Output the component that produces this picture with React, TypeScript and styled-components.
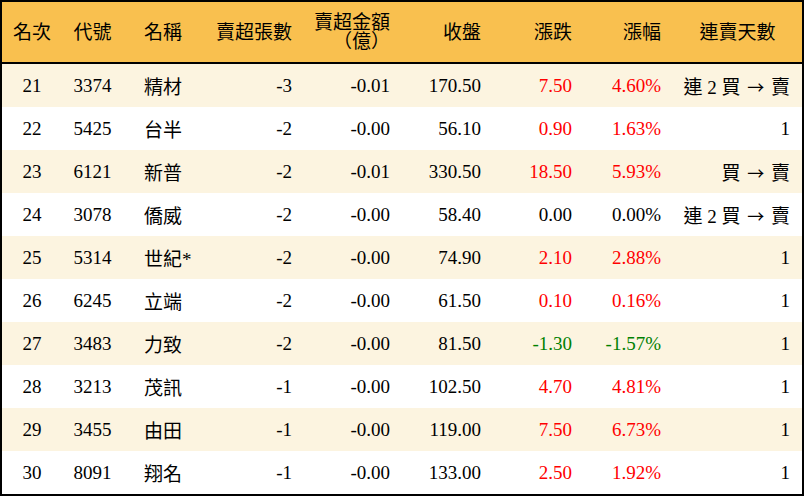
import React from "react";
import styled, { createGlobalStyle } from "styled-components";

const Global = createGlobalStyle`
  html, body { margin: 0; padding: 0; background: #ffffff; }
  * { box-sizing: border-box; }
`;

const COLS = "60px 61px 81px 100px 98px 91px 91px 89px 129px";

type Align = "center" | "left" | "right";
type Tone = "up" | "down" | "flat";

const Board = styled.div`
  width: 804px;
  height: 496px;
  border: 2px solid #000;
  background: #fff;
  font-family: "Liberation Serif", "Noto Sans CJK TC", serif;
  font-size: 19px;
  color: #000;
  display: flex;
  flex-direction: column;
  text-spacing-trim: space-all;
`;

const HeadRow = styled.div`
  display: grid;
  grid-template-columns: ${COLS};
  height: 62px;
  background: #f9c04f;
  border-bottom: 2px solid #000;
  align-items: center;
`;

const HeadCell = styled.div<{ $align: Align }>`
  text-align: ${(p) => p.$align};
  padding: ${(p) =>
    p.$align === "left" ? "0 0 0 21px" : p.$align === "right" ? "0 12px 0 0" : "0"};
  line-height: 19px;
  white-space: nowrap;
`;

const Row = styled.div<{ $striped: boolean }>`
  display: grid;
  grid-template-columns: ${COLS};
  height: 43px;
  background: ${(p) => (p.$striped ? "#fcf4e0" : "#ffffff")};
  align-items: center;
`;

const Cell = styled.div<{ $align: Align; $tone?: Tone }>`
  text-align: ${(p) => p.$align};
  padding: ${(p) =>
    p.$align === "left" ? "0 0 0 21px" : p.$align === "right" ? "0 12px 0 0" : "0"};
  color: ${(p) => (p.$tone === "up" ? "#ff0000" : p.$tone === "down" ? "#008000" : "#000")};
  white-space: nowrap;
`;

const Arrow = styled.span`
  font-family: "Noto Sans CJK TC", sans-serif;
  font-size: 17px;
  margin: 0 2px;
`;

type Item = {
  rank: number;
  code: string;
  name: string;
  lots: string;
  amount: string;
  close: string;
  change: string;
  pct: string;
  streak: string;
};

const data: Item[] = [
  { rank: 21, code: "3374", name: "精材", lots: "-3", amount: "-0.01", close: "170.50", change: "7.50", pct: "4.60%", streak: "連 2 買 → 賣" },
  { rank: 22, code: "5425", name: "台半", lots: "-2", amount: "-0.00", close: "56.10", change: "0.90", pct: "1.63%", streak: "1" },
  { rank: 23, code: "6121", name: "新普", lots: "-2", amount: "-0.01", close: "330.50", change: "18.50", pct: "5.93%", streak: "買 → 賣" },
  { rank: 24, code: "3078", name: "僑威", lots: "-2", amount: "-0.00", close: "58.40", change: "0.00", pct: "0.00%", streak: "連 2 買 → 賣" },
  { rank: 25, code: "5314", name: "世紀*", lots: "-2", amount: "-0.00", close: "74.90", change: "2.10", pct: "2.88%", streak: "1" },
  { rank: 26, code: "6245", name: "立端", lots: "-2", amount: "-0.00", close: "61.50", change: "0.10", pct: "0.16%", streak: "1" },
  { rank: 27, code: "3483", name: "力致", lots: "-2", amount: "-0.00", close: "81.50", change: "-1.30", pct: "-1.57%", streak: "1" },
  { rank: 28, code: "3213", name: "茂訊", lots: "-1", amount: "-0.00", close: "102.50", change: "4.70", pct: "4.81%", streak: "1" },
  { rank: 29, code: "3455", name: "由田", lots: "-1", amount: "-0.00", close: "119.00", change: "7.50", pct: "6.73%", streak: "1" },
  { rank: 30, code: "8091", name: "翔名", lots: "-1", amount: "-0.00", close: "133.00", change: "2.50", pct: "1.92%", streak: "1" },
];

const toneOf = (v: string): Tone => {
  const n = parseFloat(v);
  if (n > 0) return "up";
  if (n < 0) return "down";
  return "flat";
};

const renderStreak = (s: string) => {
  const parts = s.split(" → ");
  if (parts.length < 2) return s;
  return (
    <>
      {parts[0]} <Arrow>→</Arrow> {parts[1]}
    </>
  );
};

export default function App() {
  return (
    <>
      <Global />
      <Board>
        <HeadRow>
          <HeadCell $align="center">名次</HeadCell>
          <HeadCell $align="center">代號</HeadCell>
          <HeadCell $align="left">名稱</HeadCell>
          <HeadCell $align="right">賣超張數</HeadCell>
          <HeadCell $align="right">
            賣超金額
            <br />
            （億）
          </HeadCell>
          <HeadCell $align="right">收盤</HeadCell>
          <HeadCell $align="right">漲跌</HeadCell>
          <HeadCell $align="right">漲幅</HeadCell>
          <HeadCell $align="center">連賣天數</HeadCell>
        </HeadRow>
        {data.map((d, i) => (
          <Row key={d.rank} $striped={i % 2 === 0}>
            <Cell $align="center">{d.rank}</Cell>
            <Cell $align="center">{d.code}</Cell>
            <Cell $align="left">{d.name}</Cell>
            <Cell $align="right">{d.lots}</Cell>
            <Cell $align="right">{d.amount}</Cell>
            <Cell $align="right">{d.close}</Cell>
            <Cell $align="right" $tone={toneOf(d.change)}>{d.change}</Cell>
            <Cell $align="right" $tone={toneOf(d.pct)}>{d.pct}</Cell>
            <Cell $align="right">{renderStreak(d.streak)}</Cell>
          </Row>
        ))}
      </Board>
    </>
  );
}
